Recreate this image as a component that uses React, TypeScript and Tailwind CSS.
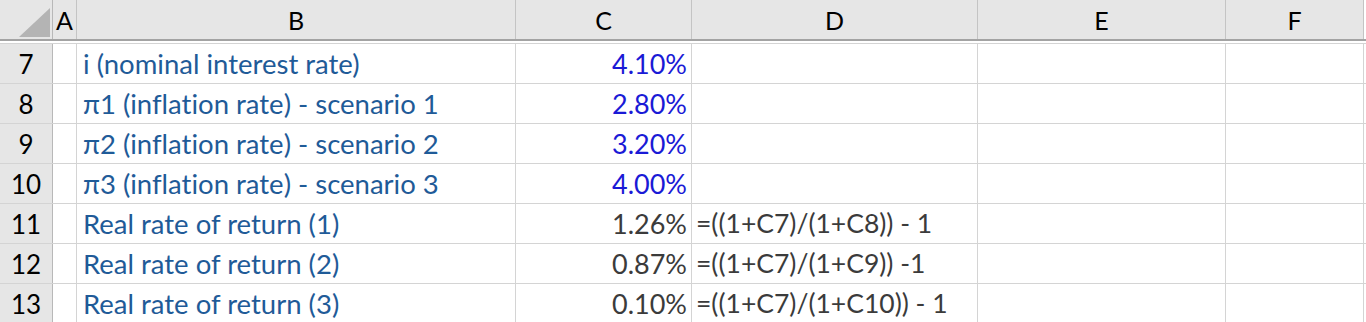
const cols = ['w-[53px]', 'w-[24px]', 'w-[439px]', 'w-[176px]', 'w-[286px]', 'w-[248px]', 'w-[138px]'];

type Row = { n: number; label: string; value: string; input?: boolean; formula?: string };

const rows: Row[] = [
  { n: 7, label: 'i (nominal interest rate)', value: '4.10%', input: true },
  { n: 8, label: 'π1 (inflation rate) - scenario 1', value: '2.80%', input: true },
  { n: 9, label: 'π2 (inflation rate) - scenario 2', value: '3.20%', input: true },
  { n: 10, label: 'π3 (inflation rate) - scenario 3', value: '4.00%', input: true },
  { n: 11, label: 'Real rate of return (1)', value: '1.26%', formula: '=((1+C7)/(1+C8)) - 1' },
  { n: 12, label: 'Real rate of return (2)', value: '0.87%', formula: '=((1+C7)/(1+C9)) -1' },
  { n: 13, label: 'Real rate of return (3)', value: '0.10%', formula: '=((1+C7)/(1+C10)) - 1' },
];

function Corner() {
  return (
    <div className="relative h-full w-[53px] shrink-0 border-r border-[#b8b8b8] bg-[#e6e6e6]">
      <svg className="absolute left-[19px] top-[8px]" width="31" height="29" viewBox="0 0 31 29">
        <polygon points="31,0 31,29 0,29" fill="#b4b4b4" />
      </svg>
    </div>
  );
}

function Header() {
  const letters = ['A', 'B', 'C', 'D', 'E', 'F'];
  return (
    <div className="flex h-[41px] border-b-2 border-[#a3a3a3] bg-[#e6e6e6]">
      <Corner />
      {letters.map((l, i) => (
        <div
          key={l}
          className={`${cols[i + 1]} flex shrink-0 items-center justify-center border-r border-[#c4c4c4] pt-[3px] text-[25px] text-black`}
        >
          {l}
        </div>
      ))}
      <div className="flex-1 bg-white" />
    </div>
  );
}

function DataRow({ row }: { row: Row }) {
  return (
    <div className="flex h-[40px] shrink-0 border-t border-[#d4d4d4]">
      <div className="flex w-[53px] shrink-0 items-center justify-center border-r border-[#b8b8b8] bg-[#e6e6e6] pt-[2px] text-[26px] text-black">
        {row.n}
      </div>
      <div className="w-[24px] shrink-0 border-r border-[#d4d4d4]" />
      <div className="flex w-[439px] shrink-0 items-center whitespace-nowrap border-r border-[#d4d4d4] pl-[6px] pt-[1px] text-[27.5px] text-[#1f5b98]">
        {row.label}
      </div>
      <div
        className={`flex w-[176px] shrink-0 items-center justify-end border-r border-[#d4d4d4] pr-[4px] pt-[1px] text-[27px] ${
          row.input ? 'text-[#1a1ad6]' : 'text-[#3b3b3b]'
        }`}
      >
        {row.value}
      </div>
      <div className="flex w-[286px] shrink-0 items-center overflow-visible whitespace-nowrap border-r border-[#d4d4d4] pl-[4px] pt-[1px] text-[26.5px] text-[#3b3b3b]">
        {row.formula}
      </div>
      <div className="w-[248px] shrink-0 border-r border-[#d4d4d4]" />
      <div className="w-[138px] shrink-0 border-r border-[#d4d4d4]" />
      <div className="flex-1" />
    </div>
  );
}

export default function App() {
  return (
    <div
      className="flex h-[322px] w-[1366px] flex-col overflow-hidden bg-white [font-variant-ligatures:none]"
      style={{ fontFamily: 'Lato, "Open Sans", sans-serif' }}
    >
      <Header />
      <div className="h-[2px] shrink-0 bg-white" />
      {rows.map((r) => (
        <DataRow key={r.n} row={r} />
      ))}
    </div>
  );
}
